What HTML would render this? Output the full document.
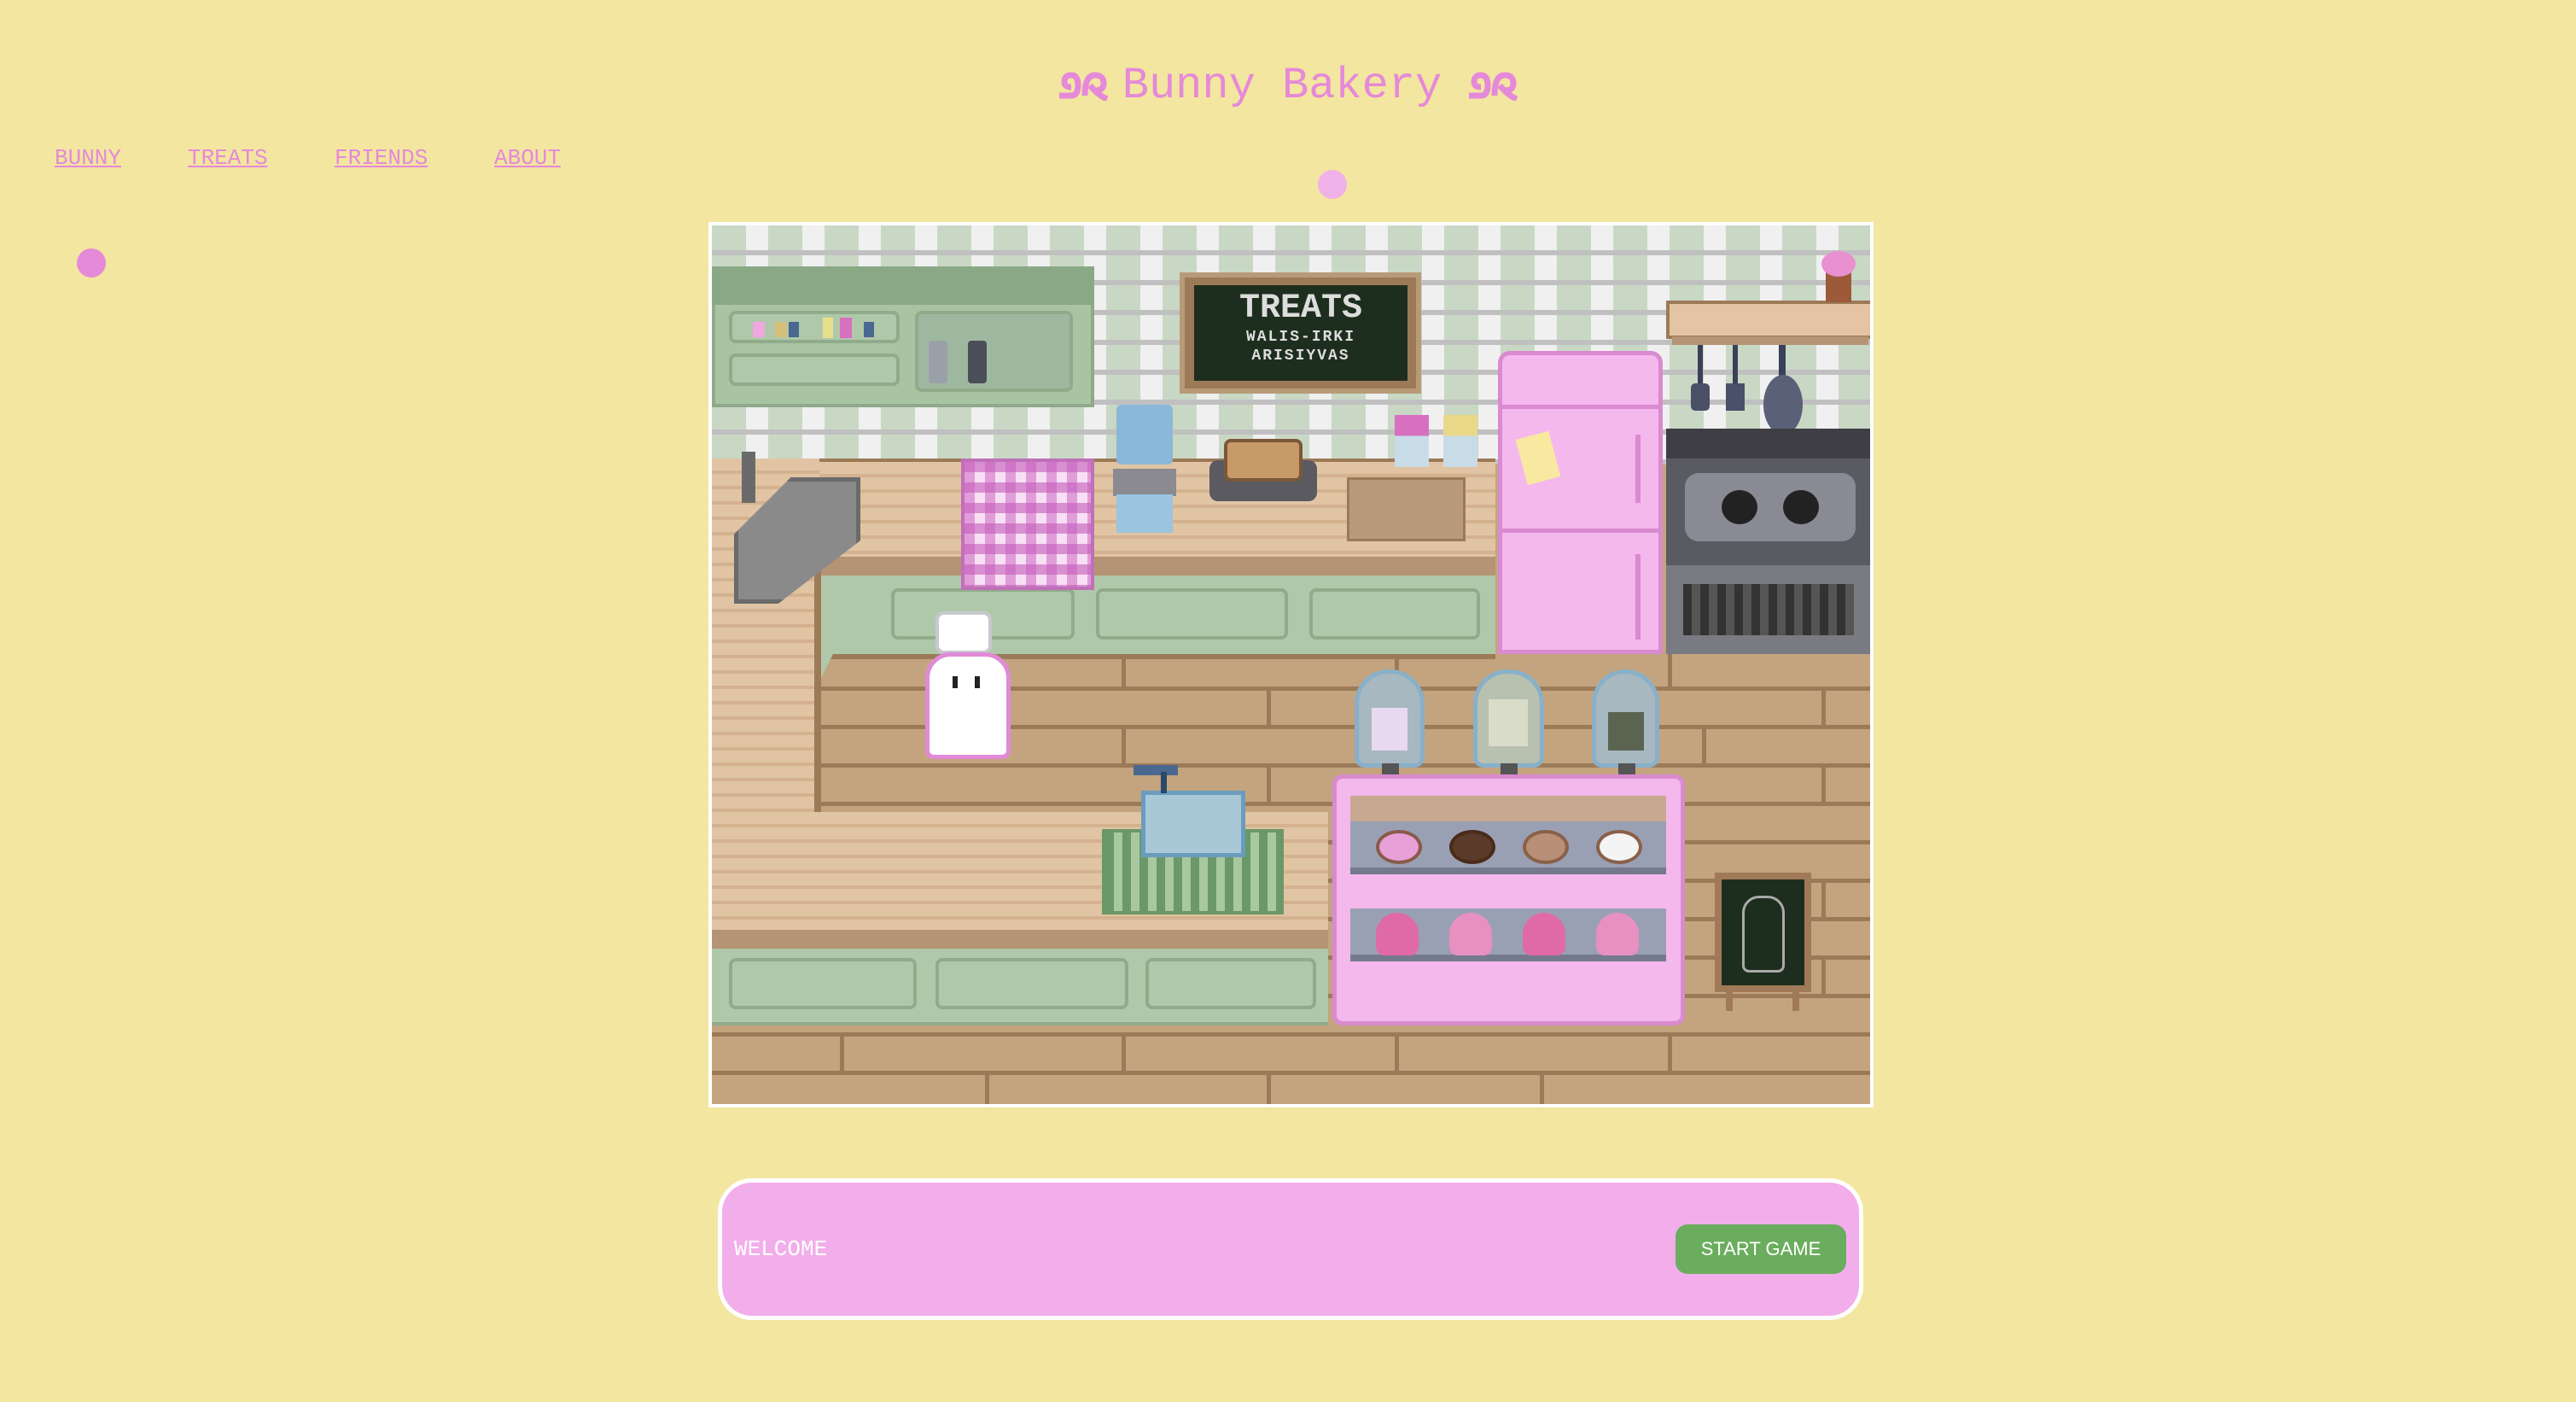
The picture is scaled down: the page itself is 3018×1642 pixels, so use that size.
<!DOCTYPE html>
<html><head><meta charset="utf-8"><style>
*{margin:0;padding:0;box-sizing:border-box}
body{width:3018px;height:1642px;background:#f3e6a0;position:relative;overflow:hidden;font-family:"Liberation Mono",monospace}
.a{position:absolute}
h1{position:absolute;left:0;width:3018px;top:66px;text-align:center;font-size:52px;color:#e589d9;font-weight:normal;line-height:70px}
nav a{position:absolute;top:170px;font-size:26px;color:#e589d9;text-decoration:underline}
.k{left:830px;top:260px;width:1365px;height:1037px;border:4px solid #fff;background:#c4a47f;overflow:hidden}
.wall{left:0;top:0;width:1365px;height:280px;background:
repeating-linear-gradient(180deg,transparent 0 29px,#c0c0c0 29px 35px),
repeating-linear-gradient(90deg,#c9d8c5 0 40px,#f0f0f0 40px 66px);}
.floor{left:0;top:500px;width:1365px;height:540px;background:
repeating-linear-gradient(180deg,#c4a47f 0 40px,#9c7a58 40px 45px)}
.joint{width:5px;height:40px;background:#9c7a58}
.wood{background:#e0c4a4;background-image:repeating-linear-gradient(180deg,transparent 0 14px,#d4b290 14px 18px)}
.grn{background:#b0c8aa}
.pnl{border:4px solid #90ab8a;border-radius:8px;background:#b0c8aa}
.pink{background:#f4b8ec;border:5px solid #d98ad0}
</style></head><body>
<h1><svg width="64" height="40" viewBox="0 0 64 40" style="vertical-align:-4px;margin-right:14px"><path d="M4 34 L18 34 Q26 34 26 22 Q26 10 18 10 Q10 10 10 18 Q10 24 18 24 M34 34 Q34 10 46 10 Q56 10 56 20 Q56 28 46 28 M40 22 Q50 34 60 38" fill="none" stroke="#e589d9" stroke-width="7"/></svg>Bunny Bakery<svg width="64" height="40" viewBox="0 0 64 40" style="vertical-align:-4px;margin-left:28px"><path d="M4 34 L18 34 Q26 34 26 22 Q26 10 18 10 Q10 10 10 18 Q10 24 18 24 M34 34 Q34 10 46 10 Q56 10 56 20 Q56 28 46 28 M40 22 Q50 34 60 38" fill="none" stroke="#e589d9" stroke-width="7"/></svg></h1>
<nav><a style="left:64px">BUNNY</a><a style="left:220px">TREATS</a><a style="left:392px">FRIENDS</a><a style="left:579px">ABOUT</a></nav>
<div class="a" style="left:1544px;top:199px;width:34px;height:34px;border-radius:50%;background:#f0b0e8"></div>
<div class="a" style="left:90px;top:291px;width:34px;height:34px;border-radius:50%;background:#e589d9"></div>

<div class="a k">
<div class="a wall"></div>
<div class="a floor"></div>
<div class="a joint" style="left:480px;top:500px"></div><div class="a joint" style="left:800px;top:500px"></div><div class="a joint" style="left:1120px;top:500px"></div>
<div class="a joint" style="left:330px;top:545px"></div><div class="a joint" style="left:650px;top:545px"></div><div class="a joint" style="left:1300px;top:545px"></div>
<div class="a joint" style="left:480px;top:590px"></div><div class="a joint" style="left:1160px;top:590px"></div>
<div class="a joint" style="left:650px;top:635px"></div><div class="a joint" style="left:1300px;top:635px"></div>
<div class="a joint" style="left:1300px;top:770px"></div><div class="a joint" style="left:1300px;top:860px"></div>
<div class="a joint" style="left:150px;top:950px"></div><div class="a joint" style="left:480px;top:950px"></div><div class="a joint" style="left:800px;top:950px"></div><div class="a joint" style="left:1120px;top:950px"></div>
<div class="a joint" style="left:320px;top:995px"></div><div class="a joint" style="left:650px;top:995px"></div><div class="a joint" style="left:970px;top:995px"></div>
<!-- upper cabinet -->
<div class="a" style="left:0;top:48px;width:448px;height:165px;background:#a9c4a2;border:4px solid #8fa98a"></div>
<div class="a" style="left:0;top:48px;width:448px;height:45px;background:#8aa886"></div>
<div class="a pnl" style="left:20px;top:100px;width:200px;height:38px"></div>
<div class="a pnl" style="left:20px;top:150px;width:200px;height:38px"></div>
<div class="a pnl" style="left:238px;top:100px;width:185px;height:95px;background:#9eb8a0"></div>
<div class="a" style="left:48px;top:113px;width:14px;height:18px;background:#f0a8e0"></div>
<div class="a" style="left:74px;top:113px;width:14px;height:18px;background:#d4c078"></div>
<div class="a" style="left:90px;top:113px;width:12px;height:18px;background:#4a6890"></div>
<div class="a" style="left:130px;top:108px;width:12px;height:24px;background:#e8e088"></div>
<div class="a" style="left:150px;top:108px;width:14px;height:24px;background:#d870c0"></div>
<div class="a" style="left:178px;top:113px;width:12px;height:18px;background:#4a6890"></div>
<div class="a" style="left:254px;top:135px;width:22px;height:50px;background:#9aa0a8;border-radius:4px"></div>
<div class="a" style="left:300px;top:135px;width:22px;height:50px;background:#4a4e58;border-radius:4px"></div>
<!-- chalkboard -->
<div class="a" style="left:548px;top:55px;width:283px;height:142px;background:#9c7a58;border:6px solid #b89a78"></div>
<div class="a" style="left:565px;top:70px;width:250px;height:112px;background:#1e2e1e;color:#ddd;text-align:center;font-size:40px;font-weight:bold;line-height:44px;padding-top:6px">TREATS<div style="font-size:18px;line-height:22px;letter-spacing:2px">WALIS-IRKI<br>ARISIYVAS</div></div>
<!-- counter top -->
<div class="a wood" style="left:0;top:273px;width:918px;height:120px;border-top:4px solid #9c7a58"></div>
<div class="a" style="left:126px;top:388px;width:792px;height:22px;background:#b49474"></div>
<div class="a grn" style="left:126px;top:410px;width:792px;height:92px"></div>
<div class="a pnl" style="left:210px;top:425px;width:215px;height:60px"></div>
<div class="a pnl" style="left:450px;top:425px;width:225px;height:60px"></div>
<div class="a pnl" style="left:700px;top:425px;width:200px;height:60px"></div>
<div class="a" style="left:126px;top:502px;width:792px;height:6px;background:#9c7a58"></div>
<!-- left vertical counter -->
<div class="a wood" style="left:0;top:273px;width:126px;height:560px"></div>
<div class="a" style="left:120px;top:400px;width:8px;height:290px;background:#9c7a58"></div>
<div class="a grn" style="left:128px;top:410px;width:60px;height:120px;clip-path:polygon(0 0,100% 0,0 100%)"></div>
<!-- bottom counter -->
<div class="a wood" style="left:0;top:687px;width:722px;height:140px"></div>
<div class="a" style="left:0;top:825px;width:722px;height:22px;background:#b49474"></div>
<div class="a grn" style="left:0;top:847px;width:722px;height:90px;border-bottom:4px solid #90ab8a"></div>
<div class="a pnl" style="left:20px;top:858px;width:220px;height:60px"></div>
<div class="a pnl" style="left:262px;top:858px;width:226px;height:60px"></div>
<div class="a pnl" style="left:508px;top:858px;width:200px;height:60px"></div>
<!-- sink -->
<div class="a" style="left:35px;top:265px;width:16px;height:60px;background:#6a6a6a"></div>
<div class="a" style="left:26px;top:295px;width:148px;height:148px;background:#8a8a8a;border:5px solid #6a6a6a;clip-path:polygon(100% 0,45% 0,0 45%,0 100%,35% 100%,100% 50%)"></div>
<!-- towel -->
<div class="a" style="left:292px;top:273px;width:156px;height:154px;border:4px solid #c070b8;background:repeating-linear-gradient(90deg,rgba(200,90,190,.5) 0 12px,transparent 12px 24px),repeating-linear-gradient(180deg,#d890d0 0 12px,#f8e0f4 12px 24px)"></div>
<!-- water jug -->
<div class="a" style="left:474px;top:210px;width:66px;height:70px;background:#8ab8d8;border-radius:6px"></div>
<div class="a" style="left:470px;top:285px;width:74px;height:32px;background:#8a8a90"></div>
<div class="a" style="left:474px;top:315px;width:66px;height:45px;background:#9ac4e0"></div>
<!-- toaster -->
<div class="a" style="left:583px;top:275px;width:126px;height:48px;background:#5a5a60;border-radius:10px"></div>
<div class="a" style="left:600px;top:250px;width:92px;height:50px;background:#c89a68;border:4px solid #7a5838;border-radius:8px"></div>
<!-- jars -->
<div class="a" style="left:800px;top:222px;width:40px;height:61px;background:linear-gradient(#d870c0 0 40%,#c8dce8 40%)"></div>
<div class="a" style="left:857px;top:222px;width:40px;height:61px;background:linear-gradient(#e8d888 0 40%,#c8dce8 40%)"></div>
<!-- cutting board -->
<div class="a" style="left:744px;top:295px;width:139px;height:75px;background:#b89a7a;border:3px solid #9c7a58"></div>
<!-- fridge -->
<div class="a pink" style="left:921px;top:147px;width:193px;height:355px;border-radius:14px 14px 0 0"></div>
<div class="a" style="left:926px;top:210px;width:183px;height:5px;background:#d98ad0"></div>
<div class="a" style="left:926px;top:355px;width:183px;height:5px;background:#d98ad0"></div>
<div class="a" style="left:1082px;top:245px;width:6px;height:80px;background:#d98ad0"></div>
<div class="a" style="left:1082px;top:385px;width:6px;height:100px;background:#d98ad0"></div>
<div class="a" style="left:948px;top:245px;width:40px;height:55px;background:#f8e8a0;transform:rotate(-15deg)"></div>
<!-- shelf, utensils -->
<div class="a" style="left:1118px;top:88px;width:244px;height:45px;background:#e4c4a4;border:4px solid #9c7a58"></div>
<div class="a" style="left:1125px;top:130px;width:230px;height:10px;background:#b49474"></div>
<div class="a" style="left:1305px;top:40px;width:30px;height:50px;background:#9c5a38"></div>
<div class="a" style="left:1300px;top:30px;width:40px;height:30px;background:#e890d0;border-radius:50%"></div>
<div class="a" style="left:1155px;top:140px;width:6px;height:50px;background:#3a4058"></div>
<div class="a" style="left:1147px;top:185px;width:22px;height:32px;background:#4a5068;border-radius:5px"></div>
<div class="a" style="left:1196px;top:140px;width:6px;height:50px;background:#3a4058"></div>
<div class="a" style="left:1188px;top:185px;width:22px;height:32px;background:#4a5068"></div>
<div class="a" style="left:1250px;top:140px;width:8px;height:40px;background:#3a4058"></div>
<div class="a" style="left:1232px;top:175px;width:46px;height:70px;background:#5a6078;border-radius:50%"></div>
<!-- stove -->
<div class="a" style="left:1118px;top:238px;width:244px;height:264px;background:#5a5a62"></div>
<div class="a" style="left:1118px;top:238px;width:244px;height:35px;background:#3e3e44"></div>
<div class="a" style="left:1140px;top:290px;width:200px;height:80px;background:#8a8a95;border-radius:16px"></div>
<div class="a" style="left:1183px;top:310px;width:42px;height:40px;background:#222;border-radius:50%"></div>
<div class="a" style="left:1255px;top:310px;width:42px;height:40px;background:#222;border-radius:50%"></div>
<div class="a" style="left:1118px;top:398px;width:244px;height:104px;background:#7a7a82"></div>
<div class="a" style="left:1138px;top:420px;width:200px;height:60px;background:repeating-linear-gradient(90deg,#333 0 10px,#555 10px 20px)"></div>
<!-- bunny -->
<div class="a" style="left:262px;top:452px;width:66px;height:50px;background:#fff;border:4px solid #c8c8d0;border-radius:10px"></div>
<div class="a" style="left:250px;top:500px;width:100px;height:125px;background:#fff;border:5px solid #e08ad8;border-radius:30px 30px 10px 10px"></div>
<div class="a" style="left:282px;top:528px;width:6px;height:14px;background:#222"></div>
<div class="a" style="left:308px;top:528px;width:6px;height:14px;background:#222"></div>
<!-- register -->
<div class="a" style="left:457px;top:707px;width:213px;height:100px;border:4px solid #6a9868;background:repeating-linear-gradient(90deg,#6a9868 0 10px,#a8c8a0 10px 20px)"></div>
<div class="a" style="left:503px;top:662px;width:122px;height:78px;background:#a8c8d8;border:5px solid #6a9cc0"></div>
<div class="a" style="left:494px;top:632px;width:52px;height:12px;background:#4a6890"></div>
<div class="a" style="left:526px;top:640px;width:7px;height:25px;background:#2a4868"></div>
<!-- domes -->
<div class="a" style="left:753px;top:520px;width:82px;height:115px;background:#a8b8c0;border:5px solid #88b0c8;border-radius:40px 40px 12px 12px"></div>
<div class="a" style="left:773px;top:565px;width:42px;height:50px;background:#e8d8f0"></div>
<div class="a" style="left:892px;top:520px;width:83px;height:115px;background:#b8c0b0;border:5px solid #88b0c8;border-radius:40px 40px 12px 12px"></div>
<div class="a" style="left:910px;top:555px;width:46px;height:55px;background:#d8dcc8"></div>
<div class="a" style="left:1031px;top:520px;width:79px;height:115px;background:#a8b8c0;border:5px solid #88b0c8;border-radius:40px 40px 12px 12px"></div>
<div class="a" style="left:1050px;top:570px;width:42px;height:45px;background:#5a6450"></div>
<div class="a" style="left:785px;top:630px;width:20px;height:18px;background:#555"></div>
<div class="a" style="left:924px;top:630px;width:20px;height:18px;background:#555"></div>
<div class="a" style="left:1062px;top:630px;width:20px;height:18px;background:#555"></div>
<!-- display case -->
<div class="a pink" style="left:727px;top:643px;width:413px;height:294px;border-radius:12px"></div>
<div class="a" style="left:748px;top:668px;width:370px;height:30px;background:#c8a890"></div>
<div class="a" style="left:748px;top:698px;width:370px;height:62px;background:#9aa0b4;border-bottom:8px solid #747a8c"></div>
<div class="a" style="left:748px;top:800px;width:370px;height:62px;background:#9aa0b4;border-bottom:8px solid #747a8c"></div>
<div class="a" style="left:778px;top:708px;width:54px;height:40px;border-radius:50%;background:#e8a0d8;border:4px solid #8a5a48"></div>
<div class="a" style="left:864px;top:708px;width:54px;height:40px;border-radius:50%;background:#5a3a28;border:4px solid #4a2a18"></div>
<div class="a" style="left:950px;top:708px;width:54px;height:40px;border-radius:50%;background:#b89078;border:4px solid #8a6048"></div>
<div class="a" style="left:1036px;top:708px;width:54px;height:40px;border-radius:50%;background:#f4f4f4;border:4px solid #8a6048"></div>
<div class="a" style="left:778px;top:805px;width:50px;height:50px;border-radius:50% 50% 10px 10px;background:#e06aa8"></div>
<div class="a" style="left:864px;top:805px;width:50px;height:50px;border-radius:50% 50% 10px 10px;background:#e890c0"></div>
<div class="a" style="left:950px;top:805px;width:50px;height:50px;border-radius:50% 50% 10px 10px;background:#e06aa8"></div>
<div class="a" style="left:1036px;top:805px;width:50px;height:50px;border-radius:50% 50% 10px 10px;background:#e890c0"></div>
<!-- sign -->
<div class="a" style="left:1175px;top:758px;width:113px;height:140px;background:#1e2e1e;border:8px solid #a07a58"></div>
<div class="a" style="left:1188px;top:895px;width:8px;height:25px;background:#a07a58"></div>
<div class="a" style="left:1266px;top:895px;width:8px;height:25px;background:#a07a58"></div>
<div class="a" style="left:1207px;top:785px;width:50px;height:90px;border:3px solid #aaa;border-radius:20px 20px 8px 8px"></div>
</div>

<div class="a" style="left:841px;top:1380px;width:1342px;height:166px;background:#f2aeea;border:5px solid #fff;border-radius:40px"></div>
<div class="a" style="left:860px;top:1448px;font-size:26px;color:#fff">WELCOME</div>
<div class="a" style="left:1963px;top:1434px;width:200px;height:58px;background:#6aad5e;border-radius:14px;color:#fff;font-family:'Liberation Sans',sans-serif;font-size:22px;text-align:center;line-height:58px">START GAME</div>
</body></html>
